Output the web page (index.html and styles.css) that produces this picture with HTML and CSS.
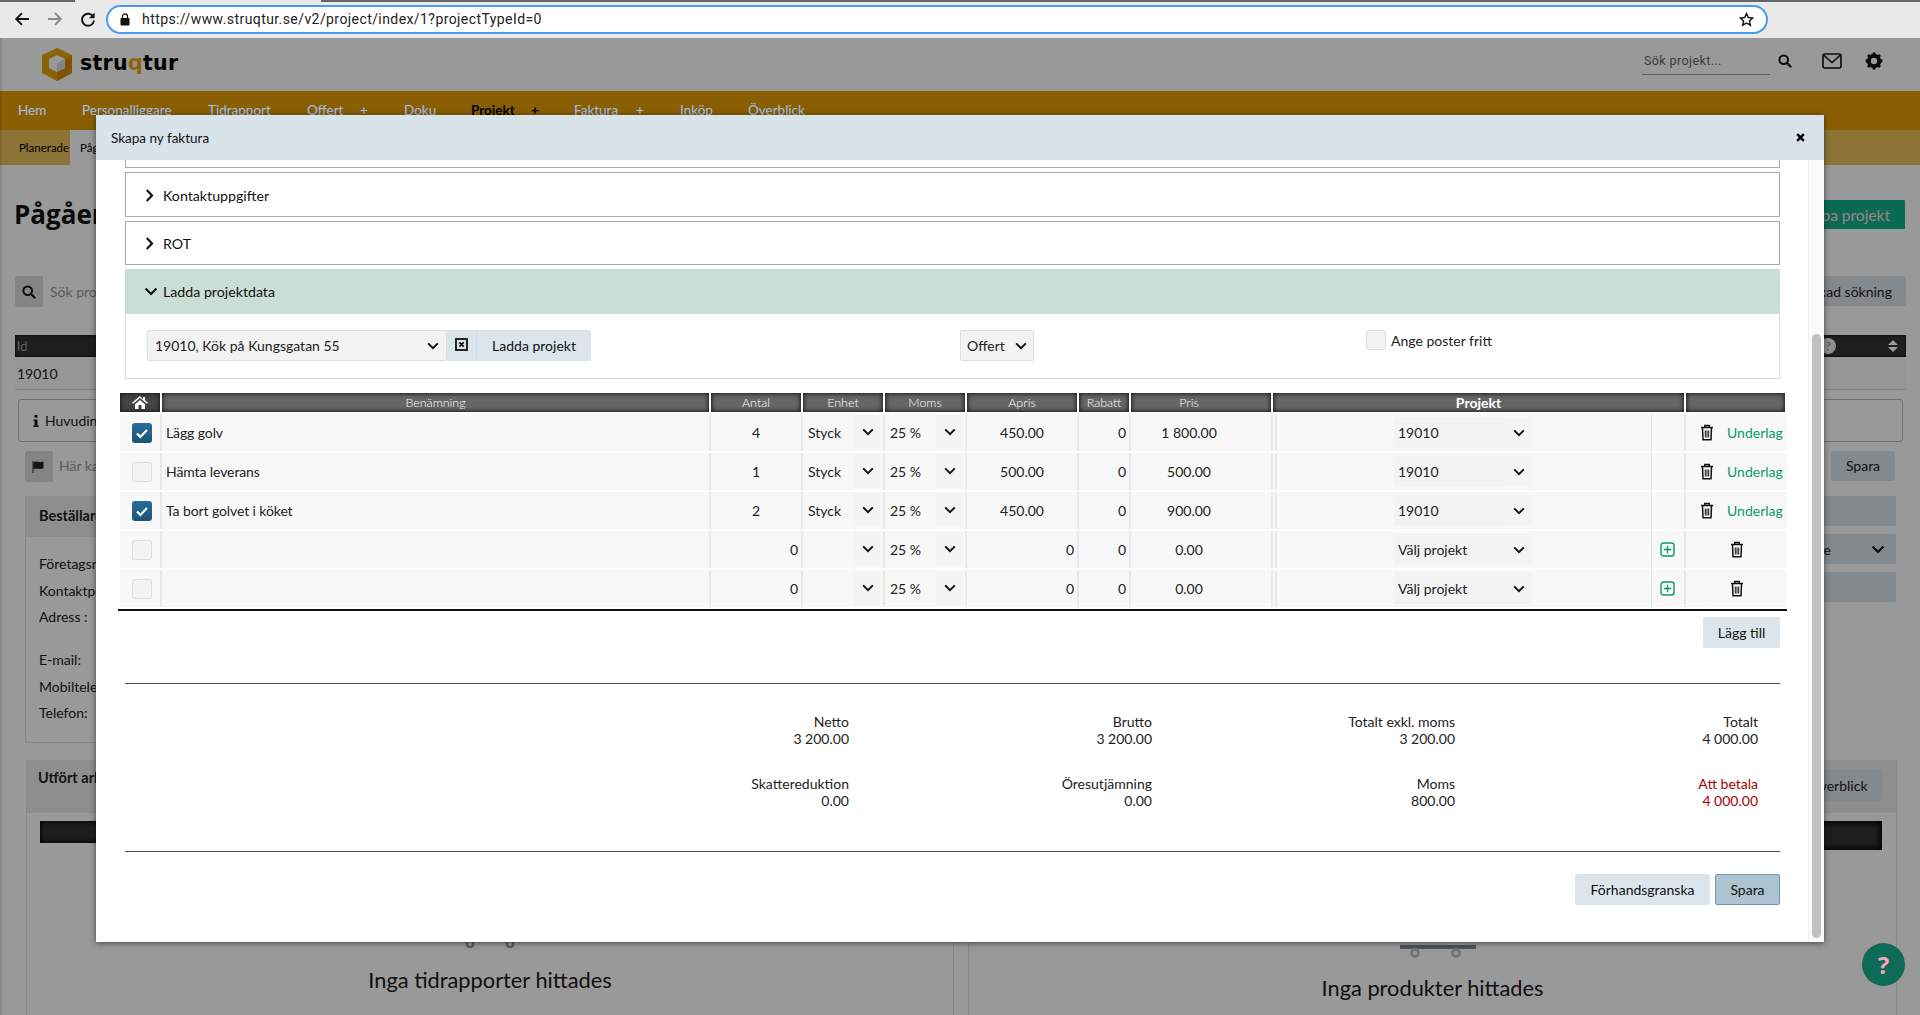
FILE: index.html
```html
<!DOCTYPE html>
<html lang="sv">
<head>
<meta charset="utf-8">
<title>Struqtur – Projekt</title>
<link rel="stylesheet" href="styles.css">
</head>
<body>
<svg class="defs" width="0" height="0" aria-hidden="true">
  <symbol id="chev" viewBox="0 0 12 8"><path d="M1.200 1.400 6 6.200l4.800-4.800" fill="none" stroke="#111" stroke-width="2"/></symbol>
  <symbol id="trash" viewBox="0 0 14 17"><path d="M1 3.500h12M4.800 3.200V1.600h4.400v1.600M2.500 3.800l.5 12h8l.5-12" fill="none" stroke="#111" stroke-width="1.500"/><path d="M5.300 6.500v7M7 6.500v7M8.700 6.500v7" stroke="#111" stroke-width="1"/></symbol>
  <symbol id="plus" viewBox="0 0 15 15"><rect x="1" y="1" width="13" height="13" rx="2.500" fill="none" stroke="#0a9a6a" stroke-width="1.400"/><path d="M7.500 3.800v7.400M3.800 7.500h7.400" stroke="#0a9a6a" stroke-width="1.300"/></symbol>
  <symbol id="check" viewBox="0 0 20 20"><path d="M5 10.500l3.400 3.400L15 7" fill="none" stroke="#fff" stroke-width="2.200"/></symbol>
</svg>

<div class="chrome">
  <div class="tabline"><span class="tabgap"></span></div>
  <div class="chrome-row">
    <svg class="chrome-ic" width="16" height="16" viewBox="0 0 16 16"><path d="M15 8H2.500M8 2.200 2.200 8 8 13.800" fill="none" stroke="#111" stroke-width="1.900"/></svg>
    <svg class="chrome-ic" width="16" height="16" viewBox="0 0 16 16"><path d="M1 8h12.500M8 2.200 13.800 8 8 13.800" fill="none" stroke="#888" stroke-width="1.900"/></svg>
    <svg class="chrome-ic" width="16" height="16" viewBox="0 0 16 16"><path d="M13.400 6A6 6 0 1 0 14 9.500" fill="none" stroke="#111" stroke-width="1.900"/><path d="M14.600 1.600v5.600H9z" fill="#111"/></svg>
    <div class="urlbar">
      <svg width="10" height="13" viewBox="0 0 10 13"><rect x="0.500" y="5" width="9" height="7.500" rx="1" fill="#111"/><path d="M2.500 5.500V3.400a2.500 2.500 0 0 1 5 0v2.100" fill="none" stroke="#111" stroke-width="1.300"/></svg>
      <span class="url">https://www.struqtur.se/v2/project/index/1?projectTypeId=0</span>
      <svg class="star" width="15" height="15" viewBox="0 0 16 16"><path d="M8 1.600l1.900 4.300 4.600.5-3.400 3.100 1 4.600L8 11.700l-4.100 2.400 1-4.600L1.500 6.400l4.600-.5z" fill="none" stroke="#111" stroke-width="1.500"/></svg>
    </div>
  </div>
</div>

<div class="app">
  <header class="head">
    <svg class="logo" width="32" height="34" viewBox="0 0 32 34"><path d="M16 1 31 8v18l-15 8L1 26V8z" fill="#e8a70d"/><path d="M16 34V18l15-10v18z" fill="#cf8c06"/><path d="M16 8l8 4v9l-8 4-8-4v-9z" fill="#fff"/><path d="M16 16v9l8-4v-9z" fill="#ddd"/></svg>
    <span class="wordmark">stru<b>q</b>tur</span>
    <div class="head-right">
      <span class="head-search">Sök projekt...</span>
      <svg class="ic-search" width="14" height="14" viewBox="0 0 14 14"><circle cx="5.700" cy="5.700" r="4.300" fill="none" stroke="#111" stroke-width="2"/><path d="M9 9l4.200 4.200" stroke="#111" stroke-width="2.200"/></svg>
      <svg class="ic-mail" width="20" height="16" viewBox="0 0 20 16"><rect x="1" y="1" width="18" height="14" rx="2" fill="none" stroke="#111" stroke-width="1.600"/><path d="M1.500 2 10 9.500 18.500 2" fill="none" stroke="#111" stroke-width="1.600"/></svg>
      <svg class="ic-gear" width="18" height="18" viewBox="0 0 18 18"><circle cx="9" cy="9" r="5.200" fill="none" stroke="#111" stroke-width="4"/><path d="M9 .6v3M9 14.400v3M.6 9h3M14.400 9h3M3 3l2.200 2.200M12.800 12.800 15 15M15 3l-2.200 2.200M5.200 12.800 3 15" stroke="#111" stroke-width="2.800"/></svg>
    </div>
  </header>
  <nav class="nav">
    <a class="nav-i w64">Hem</a><a class="nav-i w126">Personalliggare</a><a class="nav-i w99">Tidrapport</a><a class="nav-i w53">Offert</a><a class="nav-i w44">+</a><a class="nav-i w67">Doku</a><a class="nav-i w60 on">Projekt</a><a class="nav-i w43 on">+</a><a class="nav-i w62">Faktura</a><a class="nav-i w44">+</a><a class="nav-i w68">Inköp</a><a class="nav-i">Överblick</a>
  </nav>
  <div class="subnav"><a class="sub-i">Planerade</a><a class="sub-i active">Pågående</a></div>

  <main class="page">
    <div class="title-row"><h1 class="title">Pågående projekt</h1><button class="btn-green">Skapa projekt</button></div>
    <div class="search-row">
      <div class="igroup">
        <span class="ig-ic"><svg width="14" height="14" viewBox="0 0 14 14"><circle cx="5.700" cy="5.700" r="4.300" fill="none" stroke="#111" stroke-width="2"/><path d="M9 9l4.200 4.200" stroke="#111" stroke-width="2.200"/></svg></span>
        <span class="ig-ph">Sök projekt</span>
      </div>
      <button class="btn-soft">Utökad sökning</button>
    </div>
    <div class="bg-thead"><span>Id</span><span class="th-right"><i class="qmark">?</i><svg width="14" height="14" viewBox="0 0 14 14"><path d="M7 1l5 5H2zM7 13l5-5H2z" fill="#fff"/></svg></span></div>
    <div class="bg-row">19010</div>
    <div class="sub-wrap">
      <div class="tab"><svg width="6" height="12" viewBox="0 0 6 12"><path d="M1.500 0h3v2.500h-3zM.5 4.500h4V10.500h1.200V12H.3V10.500h1.300V6H.5z" fill="#111"/></svg><span>Huvudinformation</span></div>
      <div class="note-row">
        <div class="igroup note">
          <span class="ig-ic"><svg width="14" height="12" viewBox="0 0 14 12"><path d="M1 0v12M2 1.500c3-1.500 5 1 9-.5v6c-4 1.500-6-1-9 .5z" fill="#222" stroke="#222"/></svg></span>
          <span class="ig-ph">Här kan du skriva en notering</span>
        </div>
        <button class="btn-soft short">Spara</button>
      </div>
      <div class="cols">
        <section class="card top">
          <h3 class="card-h">Beställare</h3>
          <dl class="info">
            <dt>Företagsnamn:</dt><dt>Kontaktperson:</dt><dt class="gap">Adress :</dt><dt>E-mail:</dt><dt>Mobiltelefon:</dt><dt>Telefon:</dt>
          </dl>
        </section>
        <div class="stack">
          <div class="strip"></div>
          <div class="strip strip-sel"><span>Status: Pågående</span><svg width="14" height="9"><use href="#chev"/></svg></div>
          <div class="strip"></div>
        </div>
      </div>
    </div>
    <div class="cols lower">
      <section class="card">
        <div class="card-h row"><span>Utfört arbete</span></div>
        <div class="dark short"></div>
        <div class="empty one">
          <svg class="wheels" width="54" height="10" viewBox="0 0 54 10"><circle cx="7" cy="3" r="3.200" fill="none" stroke="#8c9aa8" stroke-width="2.200"/><circle cx="47" cy="3" r="3.200" fill="none" stroke="#8c9aa8" stroke-width="2.200"/></svg>
          <p>Inga tidrapporter hittades</p>
        </div>
      </section>
      <section class="card">
        <div class="card-h row"><span>Produkter</span><button class="btn-soft mini">Överblick</button></div>
        <div class="dark"></div>
        <div class="empty two">
          <svg class="wheels" width="76" height="14" viewBox="0 0 76 14"><rect width="76" height="4" fill="#7c8d9e"/><circle cx="15" cy="8" r="3.500" fill="none" stroke="#c4c4c4" stroke-width="2.800"/><circle cx="56" cy="8" r="3.500" fill="none" stroke="#c4c4c4" stroke-width="2.800"/></svg>
          <p>Inga produkter hittades</p>
        </div>
      </section>
    </div>
  </main>

  <div class="overlay"></div>
  <button class="help">?</button>

  <div class="modal">
    <div class="modal-head">
      <span>Skapa ny faktura</span>
      <svg width="9" height="9" viewBox="0 0 9 9"><path d="M1.200 1.200l6.600 6.600M7.800 1.200 1.200 7.800" stroke="#000" stroke-width="2.400"/></svg>
    </div>
    <div class="modal-scroll">
      <div class="modal-body">
        <div class="stub"></div>
        <div class="acc first"><svg width="9" height="13" viewBox="0 0 8 12"><path d="M1.500 1 6.300 6l-4.800 5" fill="none" stroke="#111" stroke-width="2"/></svg><span>Kontaktuppgifter</span></div>
        <div class="acc second"><svg width="9" height="13" viewBox="0 0 8 12"><path d="M1.500 1 6.300 6l-4.800 5" fill="none" stroke="#111" stroke-width="2"/></svg><span>ROT</span></div>
        <div class="acc open"><svg width="14" height="9" viewBox="0 0 12 8"><use href="#chev"/></svg><span>Ladda projektdata</span></div>
        <div class="acc-body">
          <div class="loader">
            <div class="sel-wide"><span>19010, Kök på Kungsgatan 55</span><svg width="12" height="8"><use href="#chev"/></svg></div>
            <span class="x-btn"><svg width="13" height="13" viewBox="0 0 13 13"><rect x="1" y="1" width="11" height="11" fill="none" stroke="#111" stroke-width="1.800"/><path d="M4.300 4.300l4.400 4.400M8.700 4.300 4.300 8.700" stroke="#111" stroke-width="1.800"/></svg></span>
            <button class="load-btn">Ladda projekt</button>
          </div>
          <div class="sel-small"><span>Offert</span><svg width="12" height="8"><use href="#chev"/></svg></div>
          <label class="free"><span class="cb"></span><span>Ange poster fritt</span></label>
        </div>

        <div class="tbl">
          <div class="t-row t-head">
            <div class="th home"><svg width="16" height="13" viewBox="0 0 16 13"><path d="M8 0 0 6.800l1 1L8 2l7 5.800 1-1-3-2.500V1h-2v2.600zM3 8.300 8 4l5 4.300V13H9.500V9h-3v4H3z" fill="#fff"/></svg></div>
            <div class="th">Benämning</div><div class="th">Antal</div><div class="th">Enhet</div><div class="th">Moms</div><div class="th">Apris</div><div class="th">Rabatt</div><div class="th pris">Pris</div><div class="th strong">Projekt</div><div class="th"></div>
          </div>

          <div class="t-row">
            <div class="td ck"><span class="cb on"><svg width="20" height="20"><use href="#check"/></svg></span></div>
            <div class="td name">Lägg golv</div><div class="td mid">4</div>
            <div class="td s"><div class="sel">Styck<span class="sel-a"><svg width="12" height="8"><use href="#chev"/></svg></span></div></div>
            <div class="td s"><div class="sel">25 %<span class="sel-a"><svg width="12" height="8"><use href="#chev"/></svg></span></div></div>
            <div class="td mid">450.00</div><div class="td end">0</div><div class="td mid pris">1 800.00</div>
            <div class="td pr"><div class="pr-main"><div class="sel pj">19010<span class="sel-a"><svg width="12" height="8"><use href="#chev"/></svg></span></div></div><div class="pr-add"></div></div>
            <div class="td act"><svg width="14" height="17"><use href="#trash"/></svg><a class="ul">Underlag</a></div>
          </div>

          <div class="t-row">
            <div class="td ck"><span class="cb"></span></div>
            <div class="td name">Hämta leverans</div><div class="td mid">1</div>
            <div class="td s"><div class="sel">Styck<span class="sel-a"><svg width="12" height="8"><use href="#chev"/></svg></span></div></div>
            <div class="td s"><div class="sel">25 %<span class="sel-a"><svg width="12" height="8"><use href="#chev"/></svg></span></div></div>
            <div class="td mid">500.00</div><div class="td end">0</div><div class="td mid pris">500.00</div>
            <div class="td pr"><div class="pr-main"><div class="sel pj">19010<span class="sel-a"><svg width="12" height="8"><use href="#chev"/></svg></span></div></div><div class="pr-add"></div></div>
            <div class="td act"><svg width="14" height="17"><use href="#trash"/></svg><a class="ul">Underlag</a></div>
          </div>

          <div class="t-row">
            <div class="td ck"><span class="cb on"><svg width="20" height="20"><use href="#check"/></svg></span></div>
            <div class="td name">Ta bort golvet i köket</div><div class="td mid">2</div>
            <div class="td s"><div class="sel">Styck<span class="sel-a"><svg width="12" height="8"><use href="#chev"/></svg></span></div></div>
            <div class="td s"><div class="sel">25 %<span class="sel-a"><svg width="12" height="8"><use href="#chev"/></svg></span></div></div>
            <div class="td mid">450.00</div><div class="td end">0</div><div class="td mid pris">900.00</div>
            <div class="td pr"><div class="pr-main"><div class="sel pj">19010<span class="sel-a"><svg width="12" height="8"><use href="#chev"/></svg></span></div></div><div class="pr-add"></div></div>
            <div class="td act"><svg width="14" height="17"><use href="#trash"/></svg><a class="ul">Underlag</a></div>
          </div>

          <div class="t-row">
            <div class="td ck"><span class="cb"></span></div>
            <div class="td name"></div><div class="td end">0</div>
            <div class="td s"><div class="sel"><span class="sel-a"><svg width="12" height="8"><use href="#chev"/></svg></span></div></div>
            <div class="td s"><div class="sel">25 %<span class="sel-a"><svg width="12" height="8"><use href="#chev"/></svg></span></div></div>
            <div class="td end">0</div><div class="td end">0</div><div class="td mid pris">0.00</div>
            <div class="td pr"><div class="pr-main"><div class="sel pj">Välj projekt<span class="sel-a"><svg width="12" height="8"><use href="#chev"/></svg></span></div></div><div class="pr-add"><svg width="15" height="15"><use href="#plus"/></svg></div></div>
            <div class="td act blank"><svg width="14" height="17"><use href="#trash"/></svg></div>
          </div>

          <div class="t-row">
            <div class="td ck"><span class="cb"></span></div>
            <div class="td name"></div><div class="td end">0</div>
            <div class="td s"><div class="sel"><span class="sel-a"><svg width="12" height="8"><use href="#chev"/></svg></span></div></div>
            <div class="td s"><div class="sel">25 %<span class="sel-a"><svg width="12" height="8"><use href="#chev"/></svg></span></div></div>
            <div class="td end">0</div><div class="td end">0</div><div class="td mid pris">0.00</div>
            <div class="td pr"><div class="pr-main"><div class="sel pj">Välj projekt<span class="sel-a"><svg width="12" height="8"><use href="#chev"/></svg></span></div></div><div class="pr-add"><svg width="15" height="15"><use href="#plus"/></svg></div></div>
            <div class="td act blank"><svg width="14" height="17"><use href="#trash"/></svg></div>
          </div>
        </div>

        <div class="add-row"><button class="btn-b">Lägg till</button></div>

        <div class="totals">
          <div class="spacer"></div>
          <div class="tot"><span>Netto</span><span>3 200.00</span></div>
          <div class="tot"><span>Brutto</span><span>3 200.00</span></div>
          <div class="tot"><span>Totalt exkl. moms</span><span>3 200.00</span></div>
          <div class="tot"><span>Totalt</span><span>4 000.00</span></div>
          <div class="spacer"></div>
          <div class="tot"><span>Skattereduktion</span><span>0.00</span></div>
          <div class="tot"><span>Öresutjämning</span><span>0.00</span></div>
          <div class="tot"><span>Moms</span><span>800.00</span></div>
          <div class="tot red"><span>Att betala</span><span>4 000.00</span></div>
        </div>

        <div class="foot"><button class="btn-b wide">Förhandsgranska</button><button class="btn-b primary">Spara</button></div>
      </div>
      <div class="scrollbar"><span class="thumb"></span></div>
    </div>
  </div>
</div>
</body>
</html>
```
FILE: styles.css
```css
* { box-sizing: border-box; }
html, body { margin: 0; padding: 0; height: 1015px; overflow: hidden; }
body { font-family: "Lato", "Liberation Sans", sans-serif; font-size: 14px; color: #222; background: #fff; display: flex; flex-direction: column; }
button { font: inherit; border: 0; color: inherit; }
svg { display: block; flex: none; }
.defs { position: absolute; }

/* browser chrome */
.chrome { height: 38px; flex: none; background: #e9e9e9; }
.tabline { height: 2px; background: #666; padding-left: 75px; }
.tabgap { display: block; width: 246px; height: 2px; background: #e9e9e9; }
.chrome-row { display: flex; align-items: center; height: 36px; padding: 0 0 2px 14px; }
.chrome-ic { margin-right: 17px; }
.urlbar { width: 1662px; margin-left: -7px; height: 29px; border: 2px solid #4a9af0; border-radius: 15px; background: #fff; display: flex; align-items: center; padding: 0 12px 0 12px; }
.url { margin-left: 12px; font-family: "Roboto", "Liberation Sans", sans-serif; font-size: 14px; color: #222; letter-spacing: .03em; }
.star { margin-left: auto; }

/* page under the overlay */
.app { flex: 1; position: relative; overflow: hidden; background: #fff; }
.head { height: 53px; display: flex; align-items: center; padding-left: 41px; }
.logo { margin-top: -1px; }
.wordmark { margin-left: 7px; font-family: "DejaVu Sans", sans-serif; font-weight: 700; font-size: 20.5px; color: #000; letter-spacing: .3px; margin-top: -3px; }
.wordmark b { color: #e8a70d; }
.head-right { margin-left: auto; display: flex; align-items: center; padding-right: 37px; margin-top: -8px; }
.head-search { width: 128px; height: 23px; border-bottom: 1px solid #999; font-family: "Roboto", sans-serif; font-size: 12.5px; color: #666; line-height: 18px; padding-left: 2px; letter-spacing: .4px; margin-top: 5px; }
.ic-search { margin: 0 0 0 8px; }
.ic-mail { margin-left: 30px; }
.ic-gear { margin-left: 23px; }
.nav { height: 39px; background: #e69e07; display: flex; align-items: center; padding: 0 0 2px 18px; }
.nav-i { position: relative; z-index: 1; font-size: 13.5px; color: #a3c0ea; white-space: nowrap; }
.nav-i.on { color: #000; font-weight: 700; }
.w64 { width: 64px; } .w126 { width: 126px; } .w99 { width: 99px; } .w53 { width: 53px; } .w44 { width: 44px; } .w67 { width: 67px; } .w60 { width: 60px; } .w43 { width: 43px; } .w62 { width: 62px; } .w68 { width: 68px; }
.subnav { height: 35px; background: #ecc05a; display: flex; align-items: center; align-self: stretch; }
.sub-i { height: 35px; line-height: 35px; padding: 0 0 0 19px; font-size: 11.5px; color: #000; width: 70px; white-space: nowrap; }
.sub-i.active { background: #fff; width: 90px; padding-left: 10px; }

.page { padding: 35px 14px 0 15px; }
.title-row { display: flex; justify-content: space-between; align-items: center; height: 29px; }
.title { margin: 0 0 0 -1px; font-family: "Open Sans", sans-serif; font-weight: 700; font-size: 26px; line-height: 31px; color: #111; }
.btn-green { height: 29px; width: 126px; background: #12b28c; color: #ffd9e2; border-radius: 1px; font-size: 15.5px; margin-right: 1px; padding: 0 15px 0 0; text-align: right; white-space: nowrap; }
.search-row { margin-top: 47px; display: flex; justify-content: space-between; height: 31px; }
.igroup { display: flex; height: 31px; width: 1500px; border-radius: 3px; overflow: hidden; }
.ig-ic { width: 28px; background: #ddd; display: flex; align-items: center; justify-content: center; }
.ig-ph { padding: 0 7px; line-height: 31px; color: #999; font-size: 14px; white-space: nowrap; }
.note .ig-ph { padding-left: 6px; line-height: 29px; }
.btn-soft { background: #dbe5eb; border-radius: 3px; height: 30px; width: 124px; font-size: 14px; color: #222; }
.bg-thead { margin-top: 28px; height: 22px; background: #333; box-shadow: inset 0 0 3px #000; color: #ddd; display: flex; justify-content: space-between; align-items: center; padding: 0 6px 0 2px; font-size: 13px; font-weight: 300; }
.th-right { display: flex; align-items: center; gap: 50px; }
.qmark { width: 16px; height: 16px; border-radius: 50%; background: #eee; color: #345; font-style: normal; font-size: 12px; text-align: center; line-height: 16px; }
.bg-row { height: 33px; border-bottom: 1px solid #ddd; background: #fcfcfc; line-height: 33px; padding-left: 2px; font-size: 14px; color: #222; }
.sub-wrap { padding-left: 3px; }
.tab { margin-top: 9px; height: 43px; width: 100%; max-width: 1885px; border: 1px solid #bbb; border-radius: 3px; display: flex; align-items: center; gap: 6px; padding-left: 14px; font-size: 14px; }
.note-row { display: flex; justify-content: space-between; margin: 9px 11px 0 7px; height: 31px; }
.note { width: 1700px; }
.btn-soft.short { width: 64px; line-height: 28px; padding-bottom: 2px; }
.cols { display: grid; grid-template-columns: 928px 929px; gap: 14px; padding-left: 7px; }
.sub-wrap .cols { margin-top: 14px; padding-left: 7px; }
.card { background: #fff; border: 1px solid #e3e3e3; border-top: 0; border-radius: 2px; }
.card.top { height: 247px; }
.card-h { margin: 0; height: 41px; line-height: 39px; background: #ededed; padding-left: 13px; font-size: 14.5px; font-weight: 700; color: #222; }
.info { margin: 0; padding: 14px 13px; }
.info dt { height: 26.5px; line-height: 26px; font-size: 14px; color: #222; }
.info .gap { height: 43px; }
.stack { display: flex; flex-direction: column; gap: 8px; }
.strip { height: 30px; background: #dbe5eb; border-radius: 2px; }
.strip-sel { display: flex; justify-content: flex-end; align-items: center; gap: 40px; padding-right: 11px; }
.lower { margin-top: 17px; padding-left: 11px; grid-template-columns: 928px 929px; height: 300px; }
.lower .card { height: 300px; }
.card-h.row { height: 53px; line-height: 36px; display: flex; justify-content: space-between; align-items: flex-start; padding: 0 13px 0 11px; }
.btn-soft.mini { margin-top: 10px; height: 31px; width: 90px; font-weight: 400; line-height: 1; }
.dark { margin: 8px 14px 0 13px; height: 29px; background: #333; border-radius: 1px; box-shadow: inset 0 0 6px 2px #000; }
.dark.short { height: 22px; box-shadow: inset 0 0 4px 1px #000; }
.empty { display: flex; flex-direction: column; align-items: center; margin-top: 91px; }
.empty.one { margin-top: 98px; }
.empty p { margin: 17px 0 0; font-size: 21.8px; line-height: 24px; color: #1a1a1a; }
.empty.two { margin-top: 95px; }
.empty.two p { margin-top: 17px; }
.empty.two .wheels { margin-left: 10px; }

.overlay { position: absolute; inset: 0; background: rgba(0,0,0,.4); box-shadow: inset 2px 0 0 rgba(0,0,0,.1); }
.help { position: absolute; z-index: 2; left: 1862px; top: 905px; width: 43px; height: 43px; border-radius: 50%; background: #0e6b55; color: #f7a8c0; font-family: "Open Sans", sans-serif; font-weight: 700; font-size: 24px; line-height: 43px; padding: 0; box-shadow: 0 0 1px #d88; }

/* modal */
.modal { position: absolute; z-index: 2; left: 96px; top: 77px; width: 1728px; height: 827px; background: #fff; box-shadow: 0 1px 6px rgba(0,0,0,.55); display: flex; flex-direction: column; }
.modal-head { height: 45px; flex: none; background: #d8e3ea; display: flex; justify-content: space-between; align-items: center; padding: 0 19px 0 15px; font-size: 13.5px; color: #111; }
.modal-scroll { flex: 1; display: flex; min-height: 0; }
.modal-body { flex: 1; padding: 0 28px 0 29px; min-width: 0; }
.scrollbar { width: 16px; background: #fafafa; border-left: 1px solid #eee; padding: 174px 3px 3px 3px; }
.thumb { display: block; width: 9px; height: 604px; background: #c1c1c1; border-radius: 5px; }
.stub { height: 8px; border: 1px solid #aaa; border-top: 0; margin-bottom: 4px; }
.acc { height: 45px; border: 1px solid #aaa; display: flex; align-items: center; gap: 9px; padding-left: 19px; margin-bottom: 4px; font-size: 14.2px; color: #111; }
.acc.first { padding-top: 1px; }
.acc.second { height: 44px; }
.acc.open { height: 45px; background: #c9dfd6; border: 0; margin-bottom: 0; padding-left: 19px; gap: 5px; }
.acc-body { height: 65px; border: 1px solid #ddd; border-top: 0; display: grid; grid-template-columns: 813px 406px 1fr; padding: 16px 0 0 21px; }
.loader { display: flex; height: 31px; }
.sel-wide { width: 300px; height: 31px; background: #f2f2f2; border: 1px solid #ddd; border-radius: 2px; display: flex; justify-content: space-between; align-items: center; padding: 0 7px 0 7px; font-size: 14px; color: #222; }
.x-btn { width: 30px; background: #dbe5eb; display: flex; align-items: center; justify-content: center; border-right: 1px solid #cfdbe2; padding-bottom: 2px; }
.load-btn { width: 114px; background: #dbe5eb; border-radius: 0 2px 2px 0; font-size: 14px; color: #111; }
.sel-small { width: 74px; height: 31px; background: #f2f2f2; border: 1px solid #ddd; border-radius: 2px; display: flex; justify-content: space-between; align-items: center; padding: 0 6px; font-size: 14px; color: #222; }
.free { display: flex; gap: 5px; font-size: 14px; height: 20px; align-items: center; color: #222; }
.cb { display: flex; width: 20px; height: 20px; background: #f3f3f3; border: 1px solid #ddd; border-radius: 3px; }
.cb.on { background: linear-gradient(#2a6d98, #1b5478); border: 0; box-shadow: 0 0 3px #fff; }

.tbl { margin: 14px 0 0 -7px; width: 1669px; border-bottom: 2px solid #111; padding-bottom: 2px; }
.t-row { display: grid; grid-template-columns: 42px 549px 92px 82px 82px 112px 52px 142px 413px 101px; height: 37px; margin-bottom: 2px; margin-left: 2px; }
.t-row:last-child { margin-bottom: 0; }
.t-head { height: 19px; margin-bottom: 2px; }
.th { background: #666; box-shadow: inset 0 0 4px 1px #1c1c1c; border-right: 2px solid #fff; color: #fff; font-size: 12.5px; font-weight: 300; text-align: center; line-height: 20px; overflow: hidden; }
.th.strong { color: #fff; font-weight: 700; font-size: 14px; }
.th.home { display: flex; justify-content: center; align-items: center; background: #444; }
.th.pris { padding-right: 24px; }
.td { background: #f8f8f8; border-right: 2px solid #e8e8e8; display: flex; align-items: center; font-size: 14px; color: #222; min-width: 0; }
.td.pris { padding-right: 24px; }
.ck { justify-content: center; padding-left: 3px; }
.name { padding-left: 4px; letter-spacing: -.1px; }
.mid { justify-content: center; }
.end { justify-content: flex-end; padding-right: 3px; }
.td.s { padding: 1px 2px 2px 1px; align-items: stretch; }
.sel { flex: 1; display: flex; align-items: center; padding-left: 4px; background: #f8f8f8; }
.sel-a { margin-left: auto; width: 27px; align-self: stretch; background: #f4f4f4; display: flex; align-items: center; justify-content: center; }
.pr { padding: 0; }
.pr-main { width: 377px; height: 100%; display: flex; align-items: center; padding-left: 117px; border-left: 2px solid #e8e8e8; margin-left: 2px; }
.sel.pj { flex: none; width: 138px; height: 31px; background: #f3f3f3; }
.pr-add { width: 31px; height: 100%; border-left: 1px solid #e0e0e0; display: flex; align-items: center; justify-content: center; margin-left: -1px; }
.act { border-right: 0; gap: 13px; padding-left: 14px; overflow: hidden; white-space: nowrap; }
.act.blank { justify-content: center; padding-left: 0; }
.ul { color: #0a9a6a; font-size: 14px; }

.add-row { display: flex; justify-content: flex-end; margin-top: 6px; }
.btn-b { height: 31px; width: 77px; background: #dbe5eb; border-radius: 2px; font-size: 14px; color: #111; }
.totals { margin-top: 35px; border-top: 1px solid #555; border-bottom: 1px solid #555; height: 169px; padding: 29px 0 0; display: grid; grid-template-columns: 421px 303px 303px 303px 303px; grid-template-rows: 34px 34px; row-gap: 28px; }
.tot { display: flex; flex-direction: column; align-items: flex-end; font-size: 14px; line-height: 17px; color: #222; white-space: nowrap; }
.tot.red { color: #a00000; }
.foot { display: flex; justify-content: flex-end; gap: 5px; margin-top: 22px; }
.btn-b.wide { width: 135px; }
.btn-b.primary { width: 65px; background: #aec3d1; border: 1px solid #6f9ab5; }
```
